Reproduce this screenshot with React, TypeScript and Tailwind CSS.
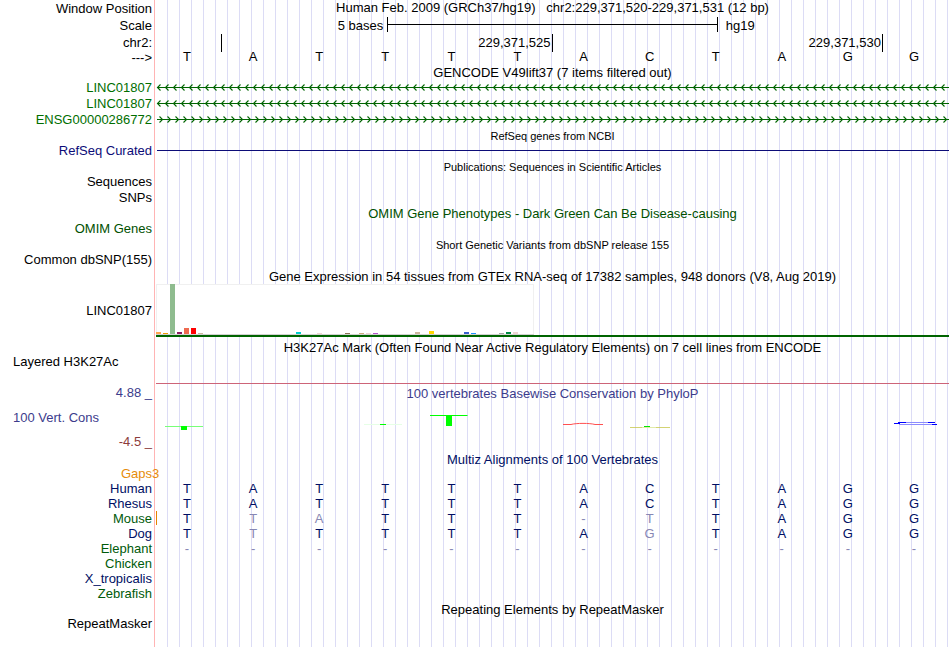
import type { ReactNode } from 'react';
import { clsx } from 'clsx';

interface TrackProps {
  label?: ReactNode;
  labelClass?: string;
  className?: string;
  children?: ReactNode;
}

// One line of the browser: side label + data area
function Track({ label, labelClass = 'leading-[18px]', className, children }: TrackProps) {
  return (
    <div className={clsx('flex', className)}>
      <div className={clsx('w-[152px] min-h-[15px] shrink-0 mr-1 text-right whitespace-nowrap', labelClass)}>{label}</div>
      <div className="flex-1 min-w-0">{children}</div>
    </div>
  );
}

function Title({ children, small, className }: { children: ReactNode; small?: boolean; className?: string }) {
  return (
    <div className={clsx('ml-[156px] flex items-end justify-center whitespace-nowrap', className)}>
      <h2 className={clsx('leading-3', small ? 'text-[11px]' : 'text-[13px]')}>{children}</h2>
    </div>
  );
}

// Strand line with repeated arrow heads
function Strand({ id, reverse }: { id: string; reverse?: boolean }) {
  return (
    <svg className="block w-full h-4" fill="none" stroke="#006400">
      <defs>
        <pattern id={id} width="8" height="16" patternUnits="userSpaceOnUse">
          <path d={reverse ? 'M4.5 5.5L1.5 8.5L4.5 11.5' : 'M3.5 5.5L6.5 8.5L3.5 11.5'} strokeWidth="1.1" />
        </pattern>
      </defs>
      <rect width="100%" height="16" fill={`url(#${id})`} stroke="none" />
      <line x1="1" x2="100%" y1="8.5" y2="8.5" />
    </svg>
  );
}

function Bases({ seq, faded = [] }: { seq: string; faded?: number[] }) {
  return (
    <div className="grid grid-cols-12 text-center">
      {seq.split('').map((base, i) => (
        <span key={i} className={clsx('pr-1', (base === '-' || faded.includes(i)) && 'text-[#8787b4]')}>
          {base}
        </span>
      ))}
    </div>
  );
}

// GTEx tissues: slot, height, color
const tissues: [number, number, string][] = [
  [0, 2, '#ffa54f'],
  [1, 1, '#ee9a00'],
  [2, 50, '#8fbc8f'],
  [3, 2, '#8b1c62'],
  [4, 6, '#ee6a50'],
  [5, 6, '#ff0000'],
  [6, 1, '#cdb79e'],
  [20, 2, '#00cdcd'],
  [23, 1, '#eed5d2'],
  [27, 1, '#8b7355'],
  [29, 1, '#cdaa7d'],
  [30, 1, '#eed5d2'],
  [31, 1, '#b452cd'],
  [37, 2, '#cdb79e'],
  [39, 3, '#ffd700'],
  [44, 2, '#3a5fcd'],
  [45, 1, '#1e90ff'],
  [49, 1, '#a6a6a6'],
  [50, 2, '#008b45'],
  [51, 2, '#eed5d2'],
];

const species = [
  { name: 'Human', color: 'text-[#000f64]', seq: 'TATTTTACTAGG' },
  { name: 'Rhesus', color: 'text-[#000f64]', seq: 'TATTTTACTAGG' },
  { name: 'Mouse', color: 'text-[#005a0a]', seq: 'TTATTT-TTAGG', faded: [1, 2, 7], gap: true },
  { name: 'Dog', color: 'text-[#000f64]', seq: 'TTTTTTAGTAGG', faded: [1, 7] },
  { name: 'Elephant', color: 'text-[#005a0a]', seq: '------------' },
  { name: 'Chicken', color: 'text-[#005a0a]', seq: '' },
  { name: 'X_tropicalis', color: 'text-[#000f64]', seq: '' },
  { name: 'Zebrafish', color: 'text-[#005a0a]', seq: '' },
];

export default function App() {
  return (
    <main className="min-h-screen pr-px overflow-hidden text-[13px] leading-4 text-black font-['Liberation_Sans',Arial,sans-serif] bg-white bg-[linear-gradient(to_right,#fff_154px,#ffb4b4_154px,#ffb4b4_155px,#fff_155px,#fff_156px,transparent_156px),repeating-linear-gradient(to_right,transparent_0px,transparent_11px,#dcdcf5_11px,#dcdcf5_12px)]">
      <Track label="Window Position" className="h-[17px]">
        <h1 className="text-center whitespace-pre">Human Feb. 2009 (GRCh37/hg19)   chr2:229,371,520-229,371,531 (12 bp)</h1>
      </Track>
      <Track label="Scale" className="h-[17px]">
        <div className="grid grid-cols-24 h-[15px] leading-[18px]">
          <span className="col-span-7 pr-1 text-right">5 bases</span>
          <div className="col-span-10 h-[15px] border-x border-black flex items-center">
            <div className="w-full h-px bg-black" />
          </div>
          <span className="col-span-7 pl-2">hg19</span>
        </div>
      </Track>
      <Track label="chr2:" className="h-[15px]">
        <div className="grid grid-cols-12 h-[15px] leading-[18px] text-right">
          <span className="border-r border-black" />
          <span className="col-span-5 border-r border-black pr-px">229,371,525</span>
          <span className="col-span-5 border-r border-black pr-px">229,371,530</span>
        </div>
      </Track>
      <Track label="--->" className="h-4">
        <Bases seq="TATTTTACTAGG" />
      </Track>

      <Title className="h-3.5">GENCODE V49lift37 (7 items filtered out)</Title>
      <Track label="LINC01807" className="h-4" labelClass="leading-[18px] text-[#006e00]">
        <Strand id="strand-1" reverse />
      </Track>
      <Track label="LINC01807" className="h-4" labelClass="leading-[18px] text-[#006e00]">
        <Strand id="strand-2" reverse />
      </Track>
      <Track label="ENSG00000286772" className="h-4" labelClass="leading-[18px] text-[#006e00]">
        <Strand id="strand-3" />
      </Track>

      <Title small className="h-[15px]">RefSeq genes from NCBI</Title>
      <Track label="RefSeq Curated" className="h-4" labelClass="leading-[18px] text-[#0c0c78]">
        <div className="h-4 pt-2 pl-px">
          <div className="h-px bg-[#0c0c78]" />
        </div>
      </Track>

      <Title small className="h-[15px]">Publications: Sequences in Scientific Articles</Title>
      <Track label="Sequences" className="h-4" />
      <Track label="SNPs" className="h-4" />

      <Title className="h-[15px] text-[#005000]">OMIM Gene Phenotypes - Dark Green Can Be Disease-causing</Title>
      <Track label="OMIM Genes" className="h-4" labelClass="leading-[18px] text-[#005000]" />

      <Title small className="h-[15px]">Short Genetic Variants from dbSNP release 155</Title>
      <Track label="Common dbSNP(155)" className="h-4" />

      <Title className="h-4">Gene Expression in 54 tissues from GTEx RNA-seq of 17382 samples, 948 donors (V8, Aug 2019)</Title>
      <Track label="LINC01807" labelClass="self-center pt-0.5">
        <div className="pt-px border-b-2 border-[#006400]">
          <svg className="block" width="378" height="51" shapeRendering="crispEdges">
            <rect width="378" height="51" fill="#fff" />
            <path d="M0.5 50V0.5H377.5V50" fill="none" stroke="#f0f0f0" />
            <path d="M0 50.5H378" stroke="#d2d2d2" />
            {tissues.map(([slot, height, color]) => (
              <rect key={slot} x={slot * 7} y={50 - height} width="5" height={height} fill={color} />
            ))}
          </svg>
        </div>
      </Track>

      <Title className="h-[17px]">H3K27Ac Mark (Often Found Near Active Regulatory Elements) on 7 cell lines from ENCODE</Title>
      <Track label="Layered H3K27Ac" labelClass="pl-[13px] text-left!">
        <div className="h-[30px] border-b border-[#cd6478]" />
      </Track>

      <Track
        className="h-[66px] text-[#3c3c8c]"
        labelClass="flex flex-col justify-between pt-px"
        label={
          <>
            <span>4.88 _</span>
            <span className="pl-[13px] text-left">100 Vert. Cons</span>
            <span className="text-[#8c3c3c]">-4.5 _</span>
          </>
        }
      >
        <h2 className="h-[17px] leading-[19px] text-center">100 vertebrates Basewise Conservation by PhyloP</h2>
        <svg className="block w-full h-8" viewBox="0 0 793 32" preserveAspectRatio="none" fill="none">
          <path d="M9 25.5H47" stroke="#78ff78" />
          <path d="M25 25H31V29H25Z" fill="#00ff00" />
          <path d="M208 23.5H246" stroke="#e6ffe6" />
          <path d="M224 23.5H230" stroke="#00ff00" />
          <path d="M274 14.5H311.5" stroke="#00ff00" />
          <path d="M290 15H296V25H290Z" fill="#00ff00" />
          <path d="M407 23.5H415C420 22 434 22 439 23.5H447" stroke="#ff5050" />
          <path d="M474 26.5H486M500 26.5H514" stroke="#c8c850" strokeOpacity="0.8" />
          <path d="M486 26.5H500" stroke="#e1ebaa" />
          <path d="M488 25.5H494" stroke="#00e600" />
          <path d="M743 21.5H778M743 23.5H776" stroke="#8c8cff" />
          <path d="M738 22.5H744M742 21.5H750M772 21.5H779M776 23.5H781" stroke="#0000ff" />
        </svg>
      </Track>

      <Title className="h-4 text-[#000f64]">Multiz Alignments of 100 Vertebrates</Title>
      <Track label="Gaps3" className="h-[15px]" labelClass="pl-[121px] text-left! text-[#e68c0a]" />
      {species.map((row) => (
        <Track key={row.name} label={row.name} className="h-[15px]" labelClass={row.color}>
          <div className={clsx('h-3.5 text-[#000f64]', row.gap && 'bg-[linear-gradient(to_right,#e68200_1px,transparent_1px)]')}>
            <Bases seq={row.seq} faded={row.faded} />
          </div>
        </Track>
      ))}

      <Title className="h-[15px]">Repeating Elements by RepeatMasker</Title>
      <Track label="RepeatMasker" labelClass="leading-4" />
    </main>
  );
}
